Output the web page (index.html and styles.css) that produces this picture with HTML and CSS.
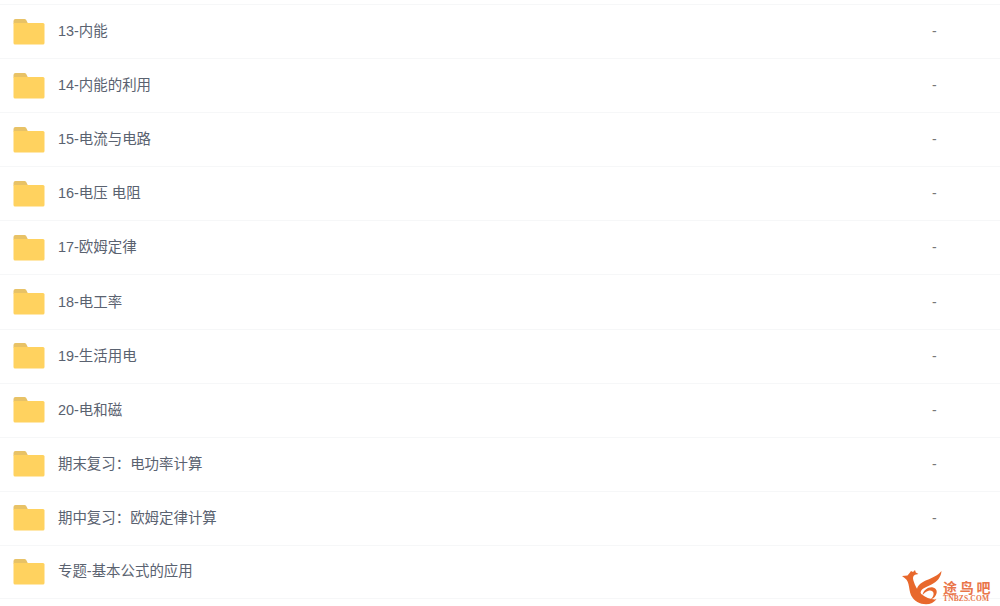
FILE: index.html
```html
<!DOCTYPE html>
<html lang="zh-CN">
<head>
<meta charset="utf-8">
<title>文件列表</title>
<link rel="stylesheet" href="styles.css">
</head>
<body>
<svg class="defs" width="0" height="0" aria-hidden="true">
  <symbol id="folder" viewBox="0 0 32 26">
    <path fill="#e8c266" d="M.5 2a2 2 0 0 1 2-2h9a2 2 0 0 1 1.600.8L15 4.500H.5z"/>
    <path fill="#ffd25f" d="M.5 4h29.500a1.500 1.500 0 0 1 1.500 1.500V24a1.500 1.500 0 0 1-1.500 1.500H2A1.500 1.500 0 0 1 .5 24z"/>
  </symbol>
</svg>
<main class="list">
  <div class="row"><svg class="folder"><use href="#folder"/></svg><span class="name">13-内能</span><span class="size">-</span></div>
  <div class="row"><svg class="folder"><use href="#folder"/></svg><span class="name">14-内能的利用</span><span class="size">-</span></div>
  <div class="row"><svg class="folder"><use href="#folder"/></svg><span class="name">15-电流与电路</span><span class="size">-</span></div>
  <div class="row"><svg class="folder"><use href="#folder"/></svg><span class="name">16-电压 电阻</span><span class="size">-</span></div>
  <div class="row"><svg class="folder"><use href="#folder"/></svg><span class="name">17-欧姆定律</span><span class="size">-</span></div>
  <div class="row"><svg class="folder"><use href="#folder"/></svg><span class="name">18-电工率</span><span class="size">-</span></div>
  <div class="row"><svg class="folder"><use href="#folder"/></svg><span class="name">19-生活用电</span><span class="size">-</span></div>
  <div class="row"><svg class="folder"><use href="#folder"/></svg><span class="name">20-电和磁</span><span class="size">-</span></div>
  <div class="row"><svg class="folder"><use href="#folder"/></svg><span class="name">期末复习：电功率计算</span><span class="size">-</span></div>
  <div class="row"><svg class="folder"><use href="#folder"/></svg><span class="name">期中复习：欧姆定律计算</span><span class="size">-</span></div>
  <div class="row"><svg class="folder"><use href="#folder"/></svg><span class="name">专题-基本公式的应用</span><span class="size"></span></div>
</main>
<div class="logo">
  <svg class="logo-mark" viewBox="0 0 43 38" aria-hidden="true">
    <path fill="#e8682c" d="M2 8 7.500 7.500 10 4.500 11 3l2 1L15 2l.8 2.500 2.700 1.500-3.500.8c-2 1-2.500 3-1.500 6 1.500 5 4 10 8 13.500 4 3.500 10 5.500 15 5-2.500 3-6 5-10.500 5-6 0-12-3-15-9-1.500-3.500-1.500-7-2.500-11C8 13 6 10.500 2 8z"/>
    <path fill="#e8682c" d="M41.500 3c-.5 6-4 10.500-10 13.500-4 2-9 3.500-10.500 6.500-1 2 0 4 1.500 5-3.500-1-6-3.500-5.500-7 .6-4 5-7 10-9 5.500-2.200 11-4.500 14.500-9z"/>
    <path fill="#e8682c" d="M22.500 27c1-5 6-8.500 10.500-7.500 4 .9 5 5 2 9-1 1.300-2.500 2.500-4.500 3 2-2 3.500-4 3-6.500-.4-2-2.500-3-5-2.300-2.500.7-4.500 2.300-6 4.300z"/>
  </svg>
  <div class="logo-text">
    <span class="logo-cn">途鸟吧</span>
    <span class="logo-en">TNBZS.COM</span>
  </div>
</div>
</body>
</html>
```
FILE: styles.css
```css
html, body {
  margin: 0;
  padding: 0;
  height: 606px;
  overflow: hidden;
  background: #fff;
}
body {
  position: relative;
  font-family: "Liberation Sans", "Noto Sans CJK SC", sans-serif;
  color: #5a6270;
}
.defs { position: absolute; }
.list {
  padding-top: 4px;
}
.row {
  display: flex;
  align-items: center;
  box-sizing: border-box;
  height: 54.1px;
  padding-left: 13px;
  border-top: 1px solid #f6f7f8;
}
.row:last-child { border-bottom: 1px solid #f6f7f8; }
.folder {
  flex: none;
  width: 32px;
  height: 26px;
}
.name {
  margin-left: 13px;
  padding-bottom: 1px;
  font-size: 14.45px;
  line-height: 20px;
}
.size {
  margin-left: auto;
  width: 68px;
  padding-bottom: 1px;
  font-size: 14px;
  line-height: 20px;
  color: #777;
}
.logo {
  position: absolute;
  left: 900px;
  top: 568px;
  display: flex;
  align-items: flex-start;
}
.logo-mark {
  flex: none;
  width: 43px;
  height: 38px;
}
.logo-text {
  display: flex;
  flex-direction: column;
  margin-top: 13px;
}
.logo-cn {
  font-size: 14px;
  line-height: 14px;
  letter-spacing: 2.700px;
  color: #e9764a;
  font-weight: 700;
  white-space: nowrap;
}
.logo-en {
  font-family: "Liberation Serif", serif;
  font-size: 7.500px;
  line-height: 7px;
  font-weight: 700;
  letter-spacing: .15px;
  color: #e9764a;
  white-space: nowrap;
}
```
